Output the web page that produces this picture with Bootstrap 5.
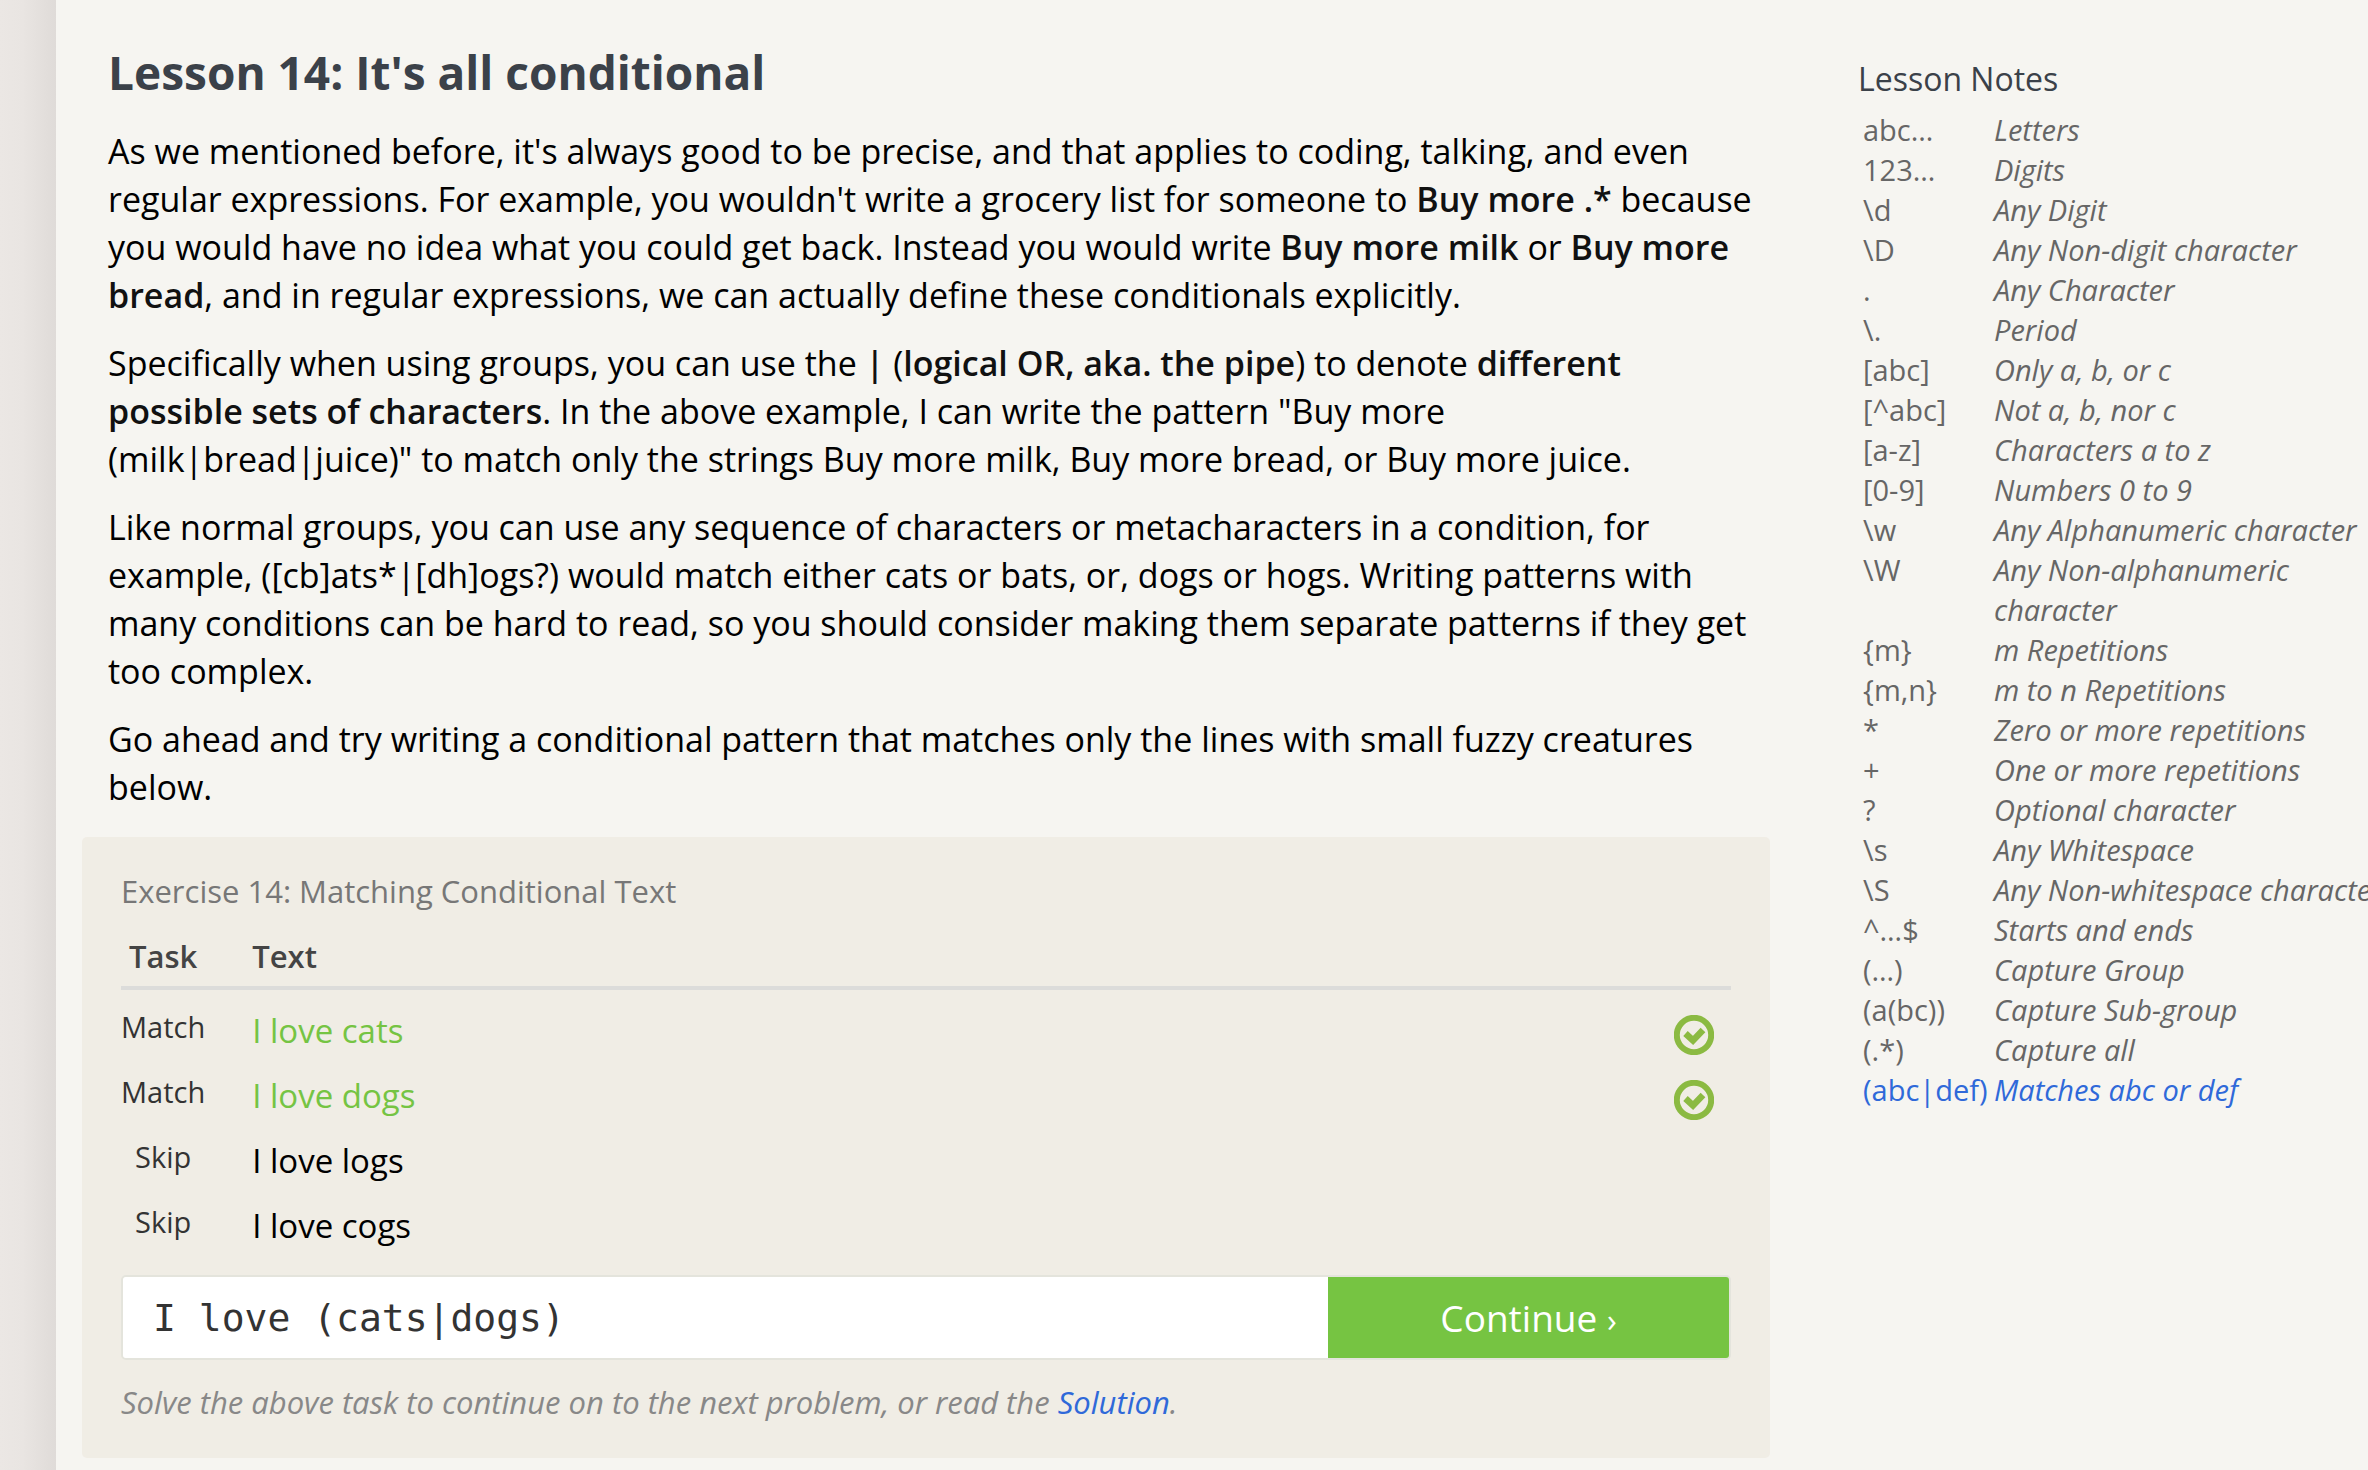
<!DOCTYPE html>
<html lang="en">
<head>
<meta charset="utf-8">
<meta name="viewport" content="width=device-width, initial-scale=1">
<title>Lesson 14: It's all conditional</title>
<link href="https://cdn.jsdelivr.net/npm/bootstrap@5.3.0/dist/css/bootstrap.min.css" rel="stylesheet">
<style>
body { font-family: "Open Sans", "Noto Sans", sans-serif; font-size: 34px; line-height: 48px; color: #000; background: #f6f5f1; overflow-x: hidden; }
a { color: #2f69d9; text-decoration: none; }
.page-edge { flex: 0 0 56px; background: linear-gradient(90deg, #ebe7e4 0, #e9e5e2 40%, #dfdbd8 100%); }
.lesson { min-width: 0; padding: 44px 88px 12px 26px; }
.lesson-body { padding: 0 12px 0 26px; }
.lesson h1 { font-size: 46px; line-height: 56px; font-weight: 700; color: #3b4149; margin-bottom: 27px; }
.lesson-body p { margin-bottom: 20px; }
.lesson-body p:last-child { margin-bottom: 26px; }
.lesson strong { font-weight: 600; color: #111; }
.exercise { background: #f0ede5; border-radius: 5px; padding: 30px 39px 32px; }
.exercise h2 { font-size: 31px; line-height: 48px; font-weight: 400; color: #777; margin-bottom: 16px; }
.tasks { width: 100%; margin-bottom: 12px; border-collapse: separate; border-spacing: 0; }
.tasks th { font-size: 31px; line-height: 48px; font-weight: 600; color: #444; padding-bottom: 6px; border-bottom: 4px solid #dcdcda; }
.tasks td { height: 65px; padding: 0; vertical-align: top; }
.tasks tbody tr:first-child td { height: 78px; padding-top: 13px; }
.task-col { width: 84px; text-align: center; font-size: 29px; color: #333; }
.tasks td.text-col { line-height: 56px; font-size: 33px; }
.tasks .text-col { padding-left: 47px; }
.solved { color: #75c443; }
.status-col { width: 57px; }
.status-col svg { display: block; margin-top: 12px; }
.answer { border: 2px solid #e4e4dc; border-radius: 5px; overflow: hidden; }
.answer .form-control { height: 81px; border: 0; border-radius: 0; padding: 0 30px; font: 38px "DejaVu Sans Mono", monospace; color: #333; }
.answer .btn { flex: 0 0 401px; border: 0; border-radius: 0; background: #76c442; color: #fff; font-size: 37px; padding: 0; }
.hint { font-size: 31px; font-style: italic; color: #888; margin: 18px 0 0; }
.notes { flex: 0 0 510px; min-width: 0; padding-top: 55px; }
.notes h2 { font-size: 32px; line-height: 48px; font-weight: 400; color: #3b4149; margin-bottom: 7px; }
.notes table { width: 525px; table-layout: fixed; font-size: 29px; line-height: 40px; color: #666; }
.notes th { width: 136px; padding: 0 0 0 5px; font-weight: 400; vertical-align: top; white-space: nowrap; }
.notes td { padding: 0; font-style: italic; }
.notes .current { color: #2f69d9; }
</style>
</head>
<body>
<div class="d-flex min-vh-100">
  <div class="page-edge"></div>
  <main class="lesson flex-grow-1">
    <div class="lesson-body">
      <h1>Lesson 14: It's all conditional</h1>
      <p>As we mentioned before, it's always good to be precise, and that applies to coding, talking, and even regular expressions. For example, you wouldn't write a grocery list for someone to <strong>Buy more .*</strong> because you would have no idea what you could get back. Instead you would write <strong>Buy more milk</strong> or <strong>Buy more bread</strong>, and in regular expressions, we can actually define these conditionals explicitly.</p>
      <p>Specifically when using groups, you can use the <strong>|</strong> (<strong>logical OR, aka. the pipe</strong>) to denote <strong>different possible sets of characters</strong>. In the above example, I can write the pattern "Buy more <span class="text-nowrap">(milk|bread|juice)"</span> to match only the strings Buy more milk, Buy more bread, or Buy more juice.</p>
      <p>Like normal groups, you can use any sequence of characters or metacharacters in a condition, for example, ([cb]ats*|[dh]ogs?) would match either cats or bats, or, dogs or hogs. Writing patterns with many conditions can be hard to read, so you should consider making them separate patterns if they get too complex.</p>
      <p>Go ahead and try writing a conditional pattern that matches only the lines with small fuzzy creatures below.</p>
    </div>
    <section class="exercise">
      <h2>Exercise 14: Matching Conditional Text</h2>
      <table class="tasks">
        <thead><tr><th class="task-col">Task</th><th class="text-col">Text</th><th class="status-col"></th></tr></thead>
        <tbody>
          <tr><td class="task-col">Match</td><td class="text-col solved">I love cats</td><td class="status-col"><svg width="40" height="40" viewBox="0 0 40 40" role="img" aria-label="Solved"><circle cx="20" cy="20" r="17.2" fill="none" stroke="#8bba42" stroke-width="6"/><path d="M11.500 18.500l7.500 7 10-10.500" fill="none" stroke="#8bba42" stroke-width="6.500"/></svg></td></tr>
          <tr><td class="task-col">Match</td><td class="text-col solved">I love dogs</td><td class="status-col"><svg width="40" height="40" viewBox="0 0 40 40" role="img" aria-label="Solved"><circle cx="20" cy="20" r="17.2" fill="none" stroke="#8bba42" stroke-width="6"/><path d="M11.500 18.500l7.500 7 10-10.500" fill="none" stroke="#8bba42" stroke-width="6.500"/></svg></td></tr>
          <tr><td class="task-col">Skip</td><td class="text-col">I love logs</td><td class="status-col"></td></tr>
          <tr><td class="task-col">Skip</td><td class="text-col">I love cogs</td><td class="status-col"></td></tr>
        </tbody>
      </table>
      <form class="answer d-flex">
        <input class="form-control" type="text" value="I love (cats|dogs)" aria-label="Your pattern">
        <button class="btn" type="button">Continue <small>›</small></button>
      </form>
      <p class="hint">Solve the above task to continue on to the next problem, or read the <a href="#">Solution</a>.</p>
    </section>
  </main>
  <aside class="notes">
    <h2>Lesson Notes</h2>
    <table>
      <tbody>
        <tr><th scope="row">abc…</th><td>Letters</td></tr>
        <tr><th scope="row">123…</th><td>Digits</td></tr>
        <tr><th scope="row">\d</th><td>Any Digit</td></tr>
        <tr><th scope="row">\D</th><td>Any Non-digit character</td></tr>
        <tr><th scope="row">.</th><td>Any Character</td></tr>
        <tr><th scope="row">\.</th><td>Period</td></tr>
        <tr><th scope="row">[abc]</th><td>Only a, b, or c</td></tr>
        <tr><th scope="row">[^abc]</th><td>Not a, b, nor c</td></tr>
        <tr><th scope="row">[a-z]</th><td>Characters a to z</td></tr>
        <tr><th scope="row">[0-9]</th><td>Numbers 0 to 9</td></tr>
        <tr><th scope="row">\w</th><td>Any Alphanumeric character</td></tr>
        <tr><th scope="row">\W</th><td>Any Non-alphanumeric character</td></tr>
        <tr><th scope="row">{m}</th><td>m Repetitions</td></tr>
        <tr><th scope="row">{m,n}</th><td>m to n Repetitions</td></tr>
        <tr><th scope="row">*</th><td>Zero or more repetitions</td></tr>
        <tr><th scope="row">+</th><td>One or more repetitions</td></tr>
        <tr><th scope="row">?</th><td>Optional character</td></tr>
        <tr><th scope="row">\s</th><td>Any Whitespace</td></tr>
        <tr><th scope="row">\S</th><td>Any Non-whitespace character</td></tr>
        <tr><th scope="row">^…$</th><td>Starts and ends</td></tr>
        <tr><th scope="row">(…)</th><td>Capture Group</td></tr>
        <tr><th scope="row">(a(bc))</th><td>Capture Sub-group</td></tr>
        <tr><th scope="row">(.*)</th><td>Capture all</td></tr>
        <tr class="current"><th scope="row">(abc|def)</th><td>Matches abc or def</td></tr>
      </tbody>
    </table>
  </aside>
</div>
<script src="https://cdn.jsdelivr.net/npm/bootstrap@5.3.0/dist/js/bootstrap.bundle.min.js"></script>
</body>
</html>
